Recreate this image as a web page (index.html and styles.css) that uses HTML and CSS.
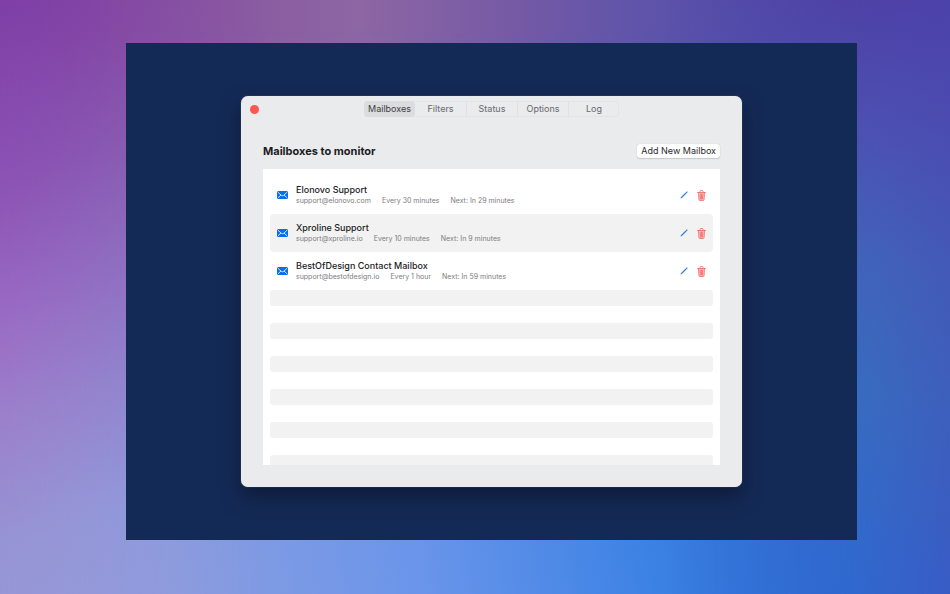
FILE: index.html
```html
<!DOCTYPE html>
<html lang="en">
<head>
<meta charset="utf-8">
<meta name="viewport" content="width=device-width, initial-scale=1">
<title>Mailboxes</title>
<link rel="stylesheet" href="styles.css">
</head>
<body>
<svg class="symbols" aria-hidden="true">
  <symbol id="mail" viewBox="0 0 22 16">
    <rect width="22" height="16" rx="3" fill="#0a6df0"/>
    <path d="M2 2.500 8.500 8.500q2.500 2 5 0L20 2.500M2 13.500 8 8M20 13.500 14 8" fill="none" stroke="#e4f0ff" stroke-width="1.800"/>
  </symbol>
  <symbol id="pencil" viewBox="0 0 16 16">
    <path d="m2.500 13.500 9.500-9.500" fill="none" stroke="#2878dc" stroke-width="2.200"/>
    <path d="m12.800 3.200 1.200-1.200" fill="none" stroke="#2878dc" stroke-width="2.200" stroke-linecap="round"/>
    <path d="m1 15 .8-2.600 1.800 1.800z" fill="#2878dc"/>
  </symbol>
  <symbol id="trash" viewBox="0 0 18 22">
    <path d="M3 5h12l-.8 14q-.1 2-2 2H5.800q-1.900 0-2-2z" fill="#fbc6c3"/>
    <path d="M1 5h16M6 5V3q0-2 2-2h2q2 0 2 2v2M3 5l.8 14q.1 2 2 2h6.400q1.900 0 2-2L15 5M6.500 8l.4 10M9 8v10M11.500 8l-.4 10" fill="none" stroke="#f0615c" stroke-width="1.500" stroke-linecap="round"/>
  </symbol>
</svg>
<div class="stage">
  <main class="window">
    <header class="titlebar">
      <button class="close" type="button" aria-label="Close"></button>
      <nav class="tabs" aria-label="Sections">
        <button class="tab active" type="button">Mailboxes</button>
        <button class="tab" type="button">Filters</button>
        <button class="tab" type="button">Status</button>
        <button class="tab" type="button">Options</button>
        <button class="tab" type="button">Log</button>
      </nav>
    </header>
    <div class="heading">
      <h1>Mailboxes to monitor</h1>
      <button class="add" type="button">Add New Mailbox</button>
    </div>
    <ul class="list">
      <li class="row">
        <svg class="mail"><use href="#mail"/></svg>
        <div class="info">
          <h2>Elonovo Support</h2>
          <p class="meta"><span>support@elonovo.com</span><span>Every 30 minutes</span><span>Next: In 29 minutes</span></p>
        </div>
        <button class="action" type="button" aria-label="Edit Elonovo Support"><svg class="pencil"><use href="#pencil"/></svg></button>
        <button class="action" type="button" aria-label="Delete Elonovo Support"><svg class="trash"><use href="#trash"/></svg></button>
      </li>
      <li class="row">
        <svg class="mail"><use href="#mail"/></svg>
        <div class="info">
          <h2>Xproline Support</h2>
          <p class="meta"><span>support@xproline.io</span><span>Every 10 minutes</span><span>Next: In 9 minutes</span></p>
        </div>
        <button class="action" type="button" aria-label="Edit Xproline Support"><svg class="pencil"><use href="#pencil"/></svg></button>
        <button class="action" type="button" aria-label="Delete Xproline Support"><svg class="trash"><use href="#trash"/></svg></button>
      </li>
      <li class="row">
        <svg class="mail"><use href="#mail"/></svg>
        <div class="info">
          <h2>BestOfDesign Contact Mailbox</h2>
          <p class="meta"><span>support@bestofdesign.io</span><span>Every 1 hour</span><span>Next: In 59 minutes</span></p>
        </div>
        <button class="action" type="button" aria-label="Edit BestOfDesign Contact Mailbox"><svg class="pencil"><use href="#pencil"/></svg></button>
        <button class="action" type="button" aria-label="Delete BestOfDesign Contact Mailbox"><svg class="trash"><use href="#trash"/></svg></button>
      </li>
      <li class="stripe" aria-hidden="true"></li>
      <li class="stripe" aria-hidden="true"></li>
      <li class="stripe" aria-hidden="true"></li>
      <li class="stripe" aria-hidden="true"></li>
      <li class="stripe" aria-hidden="true"></li>
      <li class="stripe" aria-hidden="true"></li>
    </ul>
  </main>
</div>
</body>
</html>
```
FILE: styles.css
```css
* { box-sizing: border-box; }

body {
  position: relative;
  isolation: isolate;
  margin: 0;
  min-height: 100vh;
  padding: 43px 93px 54px 126px;
  display: flex;
  font-family: Inter, "Liberation Sans", sans-serif;
  background: linear-gradient(90deg, #7f3fa5, #8750a0 14%, #8d66a3 38%, #7459a5 55%, #5e54aa 68%, #5049a9 86%, #4f3fa4);
}

/* Wallpaper: the top colours fade into the bottom ones, with a tint down each side. */
body::before,
body::after {
  content: "";
  position: absolute;
  inset: 0;
  z-index: -1;
}

body::before {
  background: linear-gradient(80deg, #9a99d8, #8a9de0 17%, #6a95ea 40%, #3c82e4 62%, #2f70d6 78%, #3460c8 90%, #3658c4);
  mask-image: linear-gradient(transparent 5%, #000 85%);
}

body::after {
  background:
    linear-gradient(165deg, #7f3fa5, #8c52b4 25%, #9a6cc4 45%, #9b80cb 58%, #9694d5 76%, #959bdb) left / 50% 100% no-repeat,
    linear-gradient(90deg, transparent 60%, rgba(70, 70, 180, .35)) right / 25% 100% no-repeat,
    linear-gradient(190deg, #4f3fa4, #4d50b1 20%, #4164ba 40%, #386cc0 60%, #3168cd 85%, #2f68d0) right / 50% 100% no-repeat;
  mask-image: linear-gradient(90deg, #000, rgba(0, 0, 0, .4) 14%, transparent 28%, transparent 70%, #000 92%);
}

button {
  margin: 0;
  padding: 0;
  border: 0;
  background: none;
  font: inherit;
}

h1, h2, p, ul { margin: 0; padding: 0; }

.symbols { display: none; }

.stage {
  flex: 1;
  display: flex;
  padding: 53px 115px;
  background: #142a56;
}

.window {
  flex: 1;
  min-width: 0;
  display: flex;
  flex-direction: column;
  padding: 0 22px 22px;
  border-radius: 7px;
  background: #e9ebed;
  box-shadow: 0 0 1px #8a95aa, 0 10px 20px rgba(8, 14, 30, .5);
}

.titlebar {
  display: grid;
  grid-template-columns: 1fr auto 1fr;
  align-items: center;
  height: 26px;
  margin: 0 -13px;
}

.close {
  width: 9px;
  height: 9px;
  border-radius: 50%;
  background: #fb5750;
}

.tabs {
  display: grid;
  grid-template-columns: repeat(5, 51px);
  height: 16px;
  border-radius: 4px;
  box-shadow: inset 0 0 0 1px #e2e4e6;
}

.tab {
  color: #68696b;
  font-size: 9px;
  line-height: 16px;
}

.tab + .tab + .tab { border-left: 1px solid #e0e2e4; }

.active {
  border-radius: 4px;
  background: #dbdcde;
  color: #3c3d3f;
}

.heading {
  display: flex;
  align-items: center;
  justify-content: space-between;
  height: 32px;
  margin: 13px 0 2px;
}

h1 {
  color: #1b1c1e;
  font-size: 11px;
  font-weight: 700;
}

.add {
  height: 14px;
  padding: 0 4px;
  border-radius: 3px;
  background: #fff;
  box-shadow: 0 0 1px #b8babd, 0 1px 1px #c8cacd;
  color: #29292b;
  font-size: 9px;
  line-height: 14px;
}

.list {
  flex: 1 1 0;
  min-height: 0;
  overflow: hidden;
  padding: 7px 7px 0;
  background: #fff;
  list-style: none;
}

.row {
  display: flex;
  align-items: center;
  height: 38px;
  padding: 0 7px;
  border-radius: 4px;
}

.row:nth-child(even) { background: #f2f2f2; }

.mail {
  width: 11px;
  height: 8px;
  margin-right: 8px;
}

.info { flex: 1; min-width: 0; }

h2 {
  color: #1c1c1e;
  font-size: 9px;
  font-weight: 500;
  line-height: 12px;
}

.meta {
  display: flex;
  gap: 11px;
  color: #7c7c7e;
  font-size: 7px;
  line-height: 10px;
}

.action { display: flex; margin-left: 9px; }

.pencil { width: 8px; height: 8px; }

.trash { width: 9px; height: 11px; }

.stripe {
  height: 16px;
  margin-bottom: 17px;
  border-radius: 3px;
  background: #f2f2f2;
}
```
